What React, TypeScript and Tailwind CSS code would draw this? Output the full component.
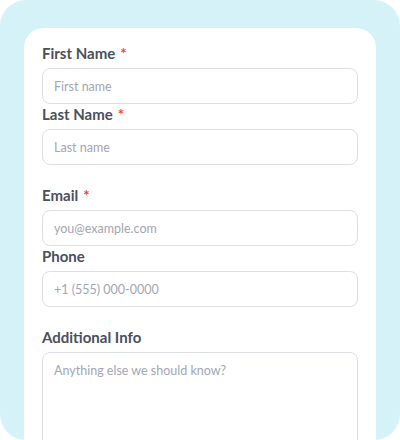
import React from "react";

type Field = {
  label: string;
  placeholder: string;
  required?: boolean;
  type?: string;
};

const groups: Field[][] = [
  [
    { label: "First Name", placeholder: "First name", required: true },
    { label: "Last Name", placeholder: "Last name", required: true },
  ],
  [
    { label: "Email", placeholder: "you@example.com", required: true, type: "email" },
    { label: "Phone", placeholder: "+1 (555) 000-0000", type: "tel" },
  ],
];

function Label({ text, required }: { text: string; required?: boolean }) {
  return (
    <label className="block text-[15px] leading-[20px] font-bold text-[#4a505c] mb-[5px]">
      {text}
      {required && <span className="ml-[5px] text-[#ef4444]">*</span>}
    </label>
  );
}

export default function App() {
  return (
    <div
      className="w-[400px] h-[440px] overflow-hidden rounded-[26px] bg-[#d6f2f9] px-6 pt-7"
      style={{ fontFamily: "Lato, 'Open Sans', sans-serif" }}
    >
      <div className="h-[440px] rounded-t-[20px] bg-white px-[18px] pt-[15px]">
        <div className="flex flex-col gap-5">
          {groups.map((g, i) => (
            <div key={i} className="flex flex-col">
              {g.map((f) => (
                <div key={f.label}>
                  <Label text={f.label} required={f.required} />
                  <input
                    type={f.type ?? "text"}
                    placeholder={f.placeholder}
                    className="block h-9 w-full rounded-lg border border-[#dedfe6] bg-white px-[11px] text-[12.5px] text-[#374151] placeholder:text-[#a3a6b4] outline-none"
                  />
                </div>
              ))}
            </div>
          ))}
          <div>
            <Label text="Additional Info" />
            <textarea
              placeholder="Anything else we should know?"
              className="block h-[120px] w-full resize-none rounded-lg border border-[#dedfe6] bg-white px-[11px] py-[9px] text-[12.5px] text-[#374151] placeholder:text-[#a3a6b4] outline-none"
            />
          </div>
        </div>
      </div>
    </div>
  );
}
